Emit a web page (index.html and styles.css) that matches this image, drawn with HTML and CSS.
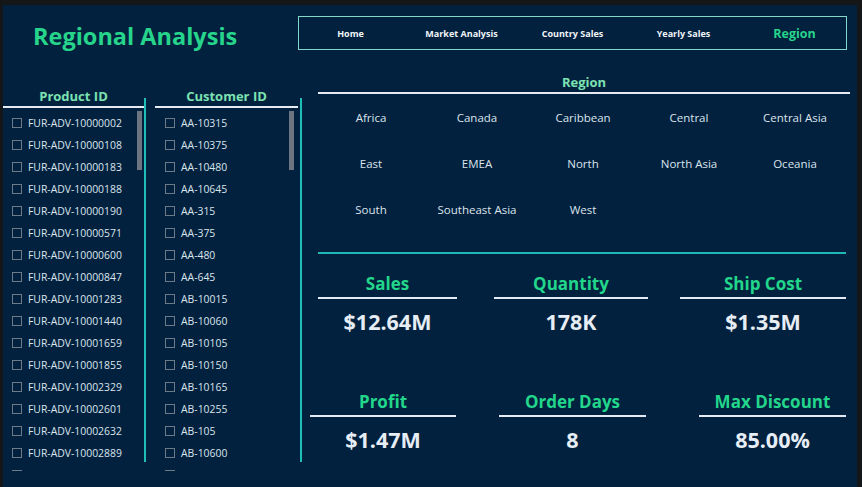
FILE: index.html
```html
<!DOCTYPE html>
<html lang="en">
<head>
<meta charset="utf-8">
<title>Regional Analysis</title>
<link rel="stylesheet" href="styles.css">
</head>
<body>
<div class="page">
  <header class="header">
    <h1 class="title">Regional Analysis</h1>
    <nav class="nav">
      <span class="nav-item">Home</span>
      <span class="nav-item">Market Analysis</span>
      <span class="nav-item">Country Sales</span>
      <span class="nav-item">Yearly Sales</span>
      <span class="nav-item active">Region</span>
    </nav>
  </header>
  <main class="main">
    <section class="slicers">
      <div class="slicer slicer-product">
        <div class="slicer-head">Product ID</div>
        <div class="slicer-list">
          <div class="row"><span class="box"></span><span>FUR-ADV-10000002</span></div>
          <div class="row"><span class="box"></span><span>FUR-ADV-10000108</span></div>
          <div class="row"><span class="box"></span><span>FUR-ADV-10000183</span></div>
          <div class="row"><span class="box"></span><span>FUR-ADV-10000188</span></div>
          <div class="row"><span class="box"></span><span>FUR-ADV-10000190</span></div>
          <div class="row"><span class="box"></span><span>FUR-ADV-10000571</span></div>
          <div class="row"><span class="box"></span><span>FUR-ADV-10000600</span></div>
          <div class="row"><span class="box"></span><span>FUR-ADV-10000847</span></div>
          <div class="row"><span class="box"></span><span>FUR-ADV-10001283</span></div>
          <div class="row"><span class="box"></span><span>FUR-ADV-10001440</span></div>
          <div class="row"><span class="box"></span><span>FUR-ADV-10001659</span></div>
          <div class="row"><span class="box"></span><span>FUR-ADV-10001855</span></div>
          <div class="row"><span class="box"></span><span>FUR-ADV-10002329</span></div>
          <div class="row"><span class="box"></span><span>FUR-ADV-10002601</span></div>
          <div class="row"><span class="box"></span><span>FUR-ADV-10002632</span></div>
          <div class="row"><span class="box"></span><span>FUR-ADV-10002889</span></div>
          <div class="row"><span class="box"></span></div>
          <div class="scroll"></div>
        </div>
      </div>
      <div class="vline"></div>
      <div class="slicer slicer-customer">
        <div class="slicer-head">Customer ID</div>
        <div class="slicer-list">
          <div class="row"><span class="box"></span><span>AA-10315</span></div>
          <div class="row"><span class="box"></span><span>AA-10375</span></div>
          <div class="row"><span class="box"></span><span>AA-10480</span></div>
          <div class="row"><span class="box"></span><span>AA-10645</span></div>
          <div class="row"><span class="box"></span><span>AA-315</span></div>
          <div class="row"><span class="box"></span><span>AA-375</span></div>
          <div class="row"><span class="box"></span><span>AA-480</span></div>
          <div class="row"><span class="box"></span><span>AA-645</span></div>
          <div class="row"><span class="box"></span><span>AB-10015</span></div>
          <div class="row"><span class="box"></span><span>AB-10060</span></div>
          <div class="row"><span class="box"></span><span>AB-10105</span></div>
          <div class="row"><span class="box"></span><span>AB-10150</span></div>
          <div class="row"><span class="box"></span><span>AB-10165</span></div>
          <div class="row"><span class="box"></span><span>AB-10255</span></div>
          <div class="row"><span class="box"></span><span>AB-105</span></div>
          <div class="row"><span class="box"></span><span>AB-10600</span></div>
          <div class="row"><span class="box"></span></div>
          <div class="scroll"></div>
        </div>
      </div>
      <div class="vline vline-last"></div>
    </section>
    <section class="content">
      <div class="region">
        <div class="region-head">Region</div>
        <div class="region-grid">
          <span>Africa</span><span>Canada</span><span>Caribbean</span><span>Central</span><span>Central Asia</span>
          <span>East</span><span>EMEA</span><span>North</span><span>North Asia</span><span>Oceania</span>
          <span>South</span><span>Southeast Asia</span><span>West</span>
        </div>
      </div>
      <div class="divider"></div>
      <div class="kpis kpis-top">
        <div class="kpi kpi-sales"><div class="kpi-title">Sales</div><div class="kpi-value">$12.64M</div></div>
        <div class="kpi kpi-qty"><div class="kpi-title">Quantity</div><div class="kpi-value">178K</div></div>
        <div class="kpi kpi-ship"><div class="kpi-title">Ship Cost</div><div class="kpi-value">$1.35M</div></div>
      </div>
      <div class="kpis kpis-bottom">
        <div class="kpi kpi-profit"><div class="kpi-title">Profit</div><div class="kpi-value">$1.47M</div></div>
        <div class="kpi kpi-days"><div class="kpi-title">Order Days</div><div class="kpi-value">8</div></div>
        <div class="kpi kpi-disc"><div class="kpi-title">Max Discount</div><div class="kpi-value">85.00%</div></div>
      </div>
    </section>
  </main>
</div>
</body>
</html>
```
FILE: styles.css
```css
* { box-sizing: border-box; }
html, body { margin: 0; padding: 0; }
body {
  width: 862px;
  height: 487px;
  overflow: hidden;
  background: #141618;
  font-family: "Open Sans", "Noto Sans", sans-serif;
}
.page {
  margin: 5px 0 0 3px;
  width: 854px;
  height: 482px;
  background: #01213f;
  overflow: hidden;
}
.header {
  display: grid;
  grid-template-columns: 295px 549px;
  align-items: start;
  height: 45px;
  padding-top: 11px;
}
.title {
  margin: 4px 0 0 30px;
  font-size: 23.5px;
  line-height: 32px;
  font-weight: 700;
  color: #27d48b;
  white-space: nowrap;
}
.nav {
  height: 34px;
  border: 1.5px solid #84d8c9;
  display: grid;
  grid-template-columns: repeat(5, 111px);
  justify-content: center;
  align-items: center;
}
.nav-item {
  text-align: center;
  color: #f2f5f8;
  font-size: 9px;
  font-weight: 700;
  white-space: nowrap;
}
.nav-item.active {
  color: #27d48b;
  font-size: 12.5px;
}
.main {
  display: flex;
  height: 437px;
}
.slicers {
  display: flex;
  align-items: flex-start;
  padding-top: 38px;
  width: 299px;
  flex: none;
}
.slicer-product { width: 141px; }
.slicer-customer { width: 143px; margin-left: 9px; }
.vline {
  width: 2px;
  height: 364px;
  margin-top: 10px;
  background: #1fbfb8;
  flex: none;
}
.vline-last { margin-left: 2px; }
.slicer-head {
  text-align: center;
  color: #7de2b2;
  font-size: 13px;
  font-weight: 700;
  line-height: 16px;
  padding-bottom: 2px;
  border-bottom: 2px solid #e4ebf2;
}
.slicer-list {
  position: relative;
  margin-top: 3px;
  padding-top: 1px;
  height: 360px;
  overflow: hidden;
}
.row {
  display: flex;
  align-items: center;
  height: 22px;
  gap: 6px;
  padding-left: 9px;
  color: #dce4ec;
  font-size: 10.4px;
  white-space: nowrap;
}
.slicer-customer .row { padding-left: 10px; }
.box {
  width: 10px;
  height: 10px;
  border: 1px solid #6d7a88;
  flex: none;
}
.scroll {
  position: absolute;
  left: 134px;
  top: 0;
  width: 5px;
  height: 59px;
  background: #6c7580;
}
.content {
  margin-left: 8px;
  width: 540px;
  padding-top: 24px;
}
.region {
  margin-left: 8px;
  width: 532px;
}
.region-head {
  text-align: center;
  color: #7de2b2;
  font-size: 13px;
  font-weight: 700;
  line-height: 16px;
  padding-bottom: 2px;
  border-bottom: 2px solid #e4ebf2;
}
.region-grid {
  display: grid;
  grid-template-columns: repeat(5, 106px);
  grid-auto-rows: 46px;
  align-items: center;
  justify-items: center;
  color: #dce4ec;
  font-size: 11.5px;
}
.region-grid span { white-space: nowrap; }
.divider {
  margin: 20px 0 0 8px;
  width: 528px;
  height: 2px;
  background: #1fb7b5;
}
.kpis {
  display: flex;
}
.kpis-top {
  margin-top: 20px;
  padding-left: 8px;
}
.kpis-bottom {
  margin-top: 56px;
}
.kpi-title {
  text-align: center;
  color: #22d68b;
  font-size: 17px;
  font-weight: 700;
  line-height: 20px;
  padding-bottom: 3px;
  border-bottom: 2px solid #e4ebf2;
  white-space: nowrap;
}
.kpi-value {
  margin-top: 9px;
  text-align: center;
  color: #e6edf4;
  font-size: 21.5px;
  font-weight: 700;
  line-height: 28px;
}
.kpi-sales { width: 139px; }
.kpi-qty { width: 154px; margin-left: 37px; }
.kpi-ship { width: 166px; margin-left: 32px; }
.kpi-profit { width: 146px; }
.kpi-days { width: 147px; margin-left: 43px; }
.kpi-disc { width: 147px; margin-left: 53px; }
```
